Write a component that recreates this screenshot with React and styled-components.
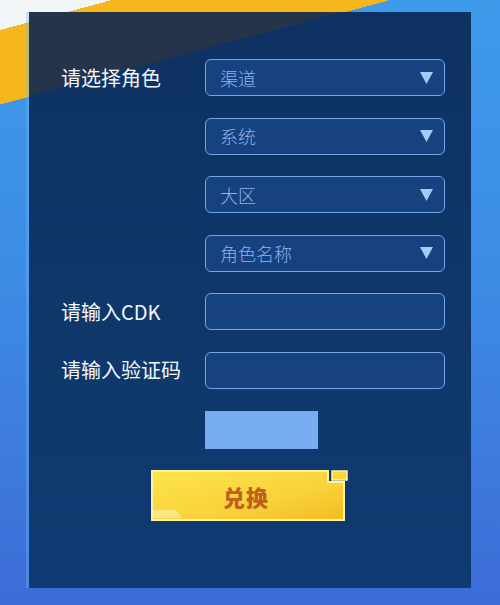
import React from "react";
import styled, { createGlobalStyle } from "styled-components";

const Global = createGlobalStyle`
  html, body { margin: 0; padding: 0; }
  body {
    width: 500px;
    height: 605px;
    overflow: hidden;
    font-family: "Noto Sans CJK SC", "Noto Sans", sans-serif;
  }
`;

const Page = styled.div`
  box-sizing: border-box;
  width: 500px;
  height: 605px;
  padding: 12px 29px 17px 29px;
  background:
    linear-gradient(165deg, #f3f6f9 0 29px, #f6b71d 29px 101px, transparent 101px),
    linear-gradient(180deg, #3e9aea 0%, #3c8ce5 45%, #3e78dc 80%, #3b6cd6 100%);
`;

const Panel = styled.div`
  box-sizing: border-box;
  width: 442px;
  height: 576px;
  padding: 47px 26px 0 32px;
  background:
    linear-gradient(165deg, #25344a 0 81px, transparent 81px),
    linear-gradient(180deg, #0e3163 0%, #0f3769 50%, #0f3b73 100%);
  box-shadow: -3px 0 0 rgba(110, 185, 250, 0.35);
  display: grid;
  grid-template-columns: 144px 240px;
  grid-template-rows: repeat(6, 37px) 38px 51px;
  row-gap: 21.6px;
  align-items: center;
`;

const Label = styled.div`
  color: #f4f7fb;
  font-size: 20px;
  font-weight: 400;
  line-height: 1;
  white-space: nowrap;
  grid-column: 1;
`;

const Field = styled.div`
  grid-column: 2;
  box-sizing: border-box;
  height: 37px;
  border: 1.5px solid #74a6e8;
  border-radius: 6px;
  background: #164280;
  display: flex;
  align-items: center;
  justify-content: space-between;
  padding: 0 11px 0 14px;
  color: #8bb4ea;
  font-size: 18px;
  font-weight: 300;
`;

const Arrow = styled.svg`
  width: 13px;
  height: 12px;
  flex: none;
`;

const Captcha = styled.div`
  grid-column: 2;
  width: 113px;
  height: 38px;
  background: #79adf1;
`;

const ButtonRow = styled.div`
  grid-column: 1 / -1;
  justify-self: start;
  margin-left: 90px;
`;

const Button = styled.button`
  position: relative;
  width: 197px;
  height: 51px;
  padding: 0;
  border: none;
  background: transparent;
  cursor: pointer;
  display: block;
`;

const ButtonShape = styled.svg`
  position: absolute;
  inset: 0;
  width: 197px;
  height: 51px;
`;

const ButtonText = styled.span`
  position: relative;
  display: block;
  width: 194px;
  text-align: center;
  padding-right: 4px;
  box-sizing: border-box;
  font-size: 22px;
  font-weight: 900;
  color: #c0601a;
  line-height: 50px;
  letter-spacing: 1px;
  font-family: "Noto Sans CJK SC", sans-serif;
`;

const ArrowIcon = () => (
  <Arrow viewBox="0 0 13 12">
    <polygon points="0,0 13,0 6.5,12" fill="#a2cbf8" />
  </Arrow>
);

const Select = ({ placeholder }) => (
  <Field>
    <span>{placeholder}</span>
    <ArrowIcon />
  </Field>
);

export default function App() {
  return (
    <>
      <Global />
      <Page>
        <Panel>
          <Label>请选择角色</Label>
          <Select placeholder="渠道" />
          <Select placeholder="系统" />
          <Select placeholder="大区" />
          <Select placeholder="角色名称" />
          <Label>请输入CDK</Label>
          <Field />
          <Label>请输入验证码</Label>
          <Field />
          <Captcha />
          <ButtonRow>
            <Button>
              <ButtonShape viewBox="0 0 197 51">
                <defs>
                  <linearGradient id="btnFill" x1="0" y1="0" x2="1" y2="1">
                    <stop offset="0" stopColor="#fde44c" />
                    <stop offset="0.6" stopColor="#f9d23a" />
                    <stop offset="1" stopColor="#f4bb22" />
                  </linearGradient>
                </defs>
                <path
                  d="M1,1 H177 V12 H193 V50 H1 Z"
                  fill="url(#btnFill)"
                  stroke="#fff29c"
                  strokeWidth="2"
                />
                <polygon points="2,40 25,40 31,48 2,48" fill="#fcea8c" opacity="0.85" />
                <rect x="181" y="1" width="15" height="9" fill="#fad93c" stroke="#fff3a6" strokeWidth="1.5" />
              </ButtonShape>
              <ButtonText>兑换</ButtonText>
            </Button>
          </ButtonRow>
        </Panel>
      </Page>
    </>
  );
}
